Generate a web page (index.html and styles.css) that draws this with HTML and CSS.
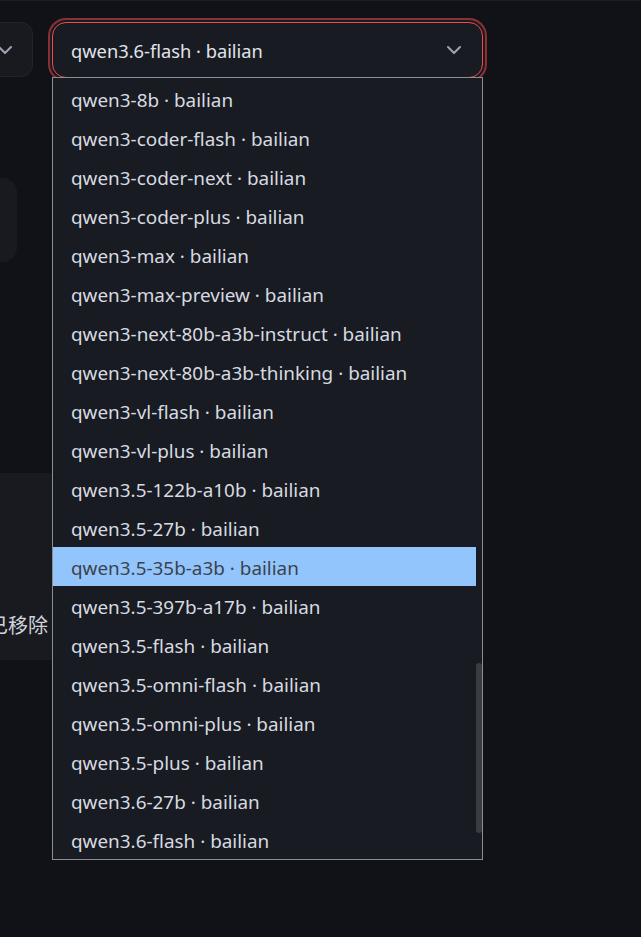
FILE: index.html
```html
<!DOCTYPE html>
<html lang="zh">
<head>
<meta charset="utf-8">
<title>Model picker</title>
<link rel="stylesheet" href="styles.css">
</head>
<body>
<div class="topline"></div>
<div class="page">
  <div class="side">
    <div class="mini-select">
      <svg class="chev" width="14" height="8" viewBox="0 0 14 8"><path d="M1 1l6 6 6-6" fill="none" stroke="#9ca3af" stroke-width="2" stroke-linecap="round" stroke-linejoin="round"/></svg>
    </div>
    <div class="card card-a"></div>
    <div class="card card-b"><span class="removed">已移除</span></div>
  </div>
  <div class="main">
    <div class="select">
      <span class="value">qwen3.6-flash · bailian</span>
      <svg class="chev" width="14" height="8" viewBox="0 0 14 8"><path d="M1 1l6 6 6-6" fill="none" stroke="#9ca3af" stroke-width="2" stroke-linecap="round" stroke-linejoin="round"/></svg>
    </div>
    <div class="dropdown">
      <ul class="options">
        <li>qwen3-8b · bailian</li>
        <li>qwen3-coder-flash · bailian</li>
        <li>qwen3-coder-next · bailian</li>
        <li>qwen3-coder-plus · bailian</li>
        <li>qwen3-max · bailian</li>
        <li>qwen3-max-preview · bailian</li>
        <li>qwen3-next-80b-a3b-instruct · bailian</li>
        <li>qwen3-next-80b-a3b-thinking · bailian</li>
        <li>qwen3-vl-flash · bailian</li>
        <li>qwen3-vl-plus · bailian</li>
        <li>qwen3.5-122b-a10b · bailian</li>
        <li>qwen3.5-27b · bailian</li>
        <li class="active">qwen3.5-35b-a3b · bailian</li>
        <li>qwen3.5-397b-a17b · bailian</li>
        <li>qwen3.5-flash · bailian</li>
        <li>qwen3.5-omni-flash · bailian</li>
        <li>qwen3.5-omni-plus · bailian</li>
        <li>qwen3.5-plus · bailian</li>
        <li>qwen3.6-27b · bailian</li>
        <li>qwen3.6-flash · bailian</li>
      </ul>
      <div class="scrolltrack"><div class="thumb"></div></div>
    </div>
  </div>
</div>
</body>
</html>
```
FILE: styles.css
```css
* { box-sizing: border-box; }
html, body { margin: 0; padding: 0; }
body {
  background: #111217;
  font-family: "Noto Sans", "Open Sans", "Noto Sans CJK SC", sans-serif;
  width: 641px;
  height: 937px;
  overflow: hidden;
}
.topline { height: 1px; background: #1c1d23; }
.page {
  display: flex;
  align-items: flex-start;
  padding-top: 21px;
}
.side {
  width: 253px;
  margin-left: -200px;
  display: flex;
  flex-direction: column;
  align-items: flex-start;
}
.mini-select {
  width: 233px;
  height: 55px;
  background: #181a20;
  border: 1px solid #22242b;
  border-radius: 12px;
  display: flex;
  align-items: center;
  justify-content: flex-end;
  padding-right: 20px;
}
.mini-select .chev { margin-top: 1px; }
.card {
  background: #181a20;
  border-radius: 14px;
}
.card-a {
  width: 217px;
  height: 84px;
  margin-top: 101px;
}
.card-b {
  width: 253px;
  height: 187px;
  margin-top: 211px;
  border-radius: 14px 0 0 14px;
  display: flex;
  align-items: flex-end;
  padding-bottom: 20px;
  padding-left: 188px;
}
.removed {
  color: #cfd3da;
  font-size: 20px;
  line-height: 28px;
  white-space: nowrap;
}
.main {
  position: relative;
  margin-left: -1px;
}
.select {
  width: 431px;
  height: 56px;
  background: #181b22;
  border: 1px solid #ef4b4b;
  border-radius: 14px;
  box-shadow: 0 0 0 2px #181b22, 0 0 0 4px rgba(239, 75, 75, 0.55);
  display: flex;
  align-items: center;
  justify-content: space-between;
  padding: 0 21px 0 18px;
  color: #e1e4ea;
  font-size: 18.3px;
}
.dropdown {
  position: absolute;
  top: 55px;
  left: 0;
  width: 431px;
  height: 783px;
  background: #181b22;
  border: 1px solid #8b8d93;
  padding-top: 1px;
  display: flex;
}
.options {
  list-style: none;
  margin: 0;
  padding: 0;
  width: 423px;
}
.options li {
  height: 39px;
  padding-top: 3px;
  line-height: 36px;
  padding-left: 18px;
  color: #d7dae0;
  font-size: 18.9px;
  white-space: nowrap;
}
.options li.active {
  background: #93c5fd;
  color: #3c424d;
}
.scrolltrack {
  width: 6px;
  position: relative;
}
.thumb {
  position: absolute;
  left: 0;
  right: 0;
  top: 584px;
  height: 170px;
  background: #3a3c42;
  border-radius: 3px;
}
```
